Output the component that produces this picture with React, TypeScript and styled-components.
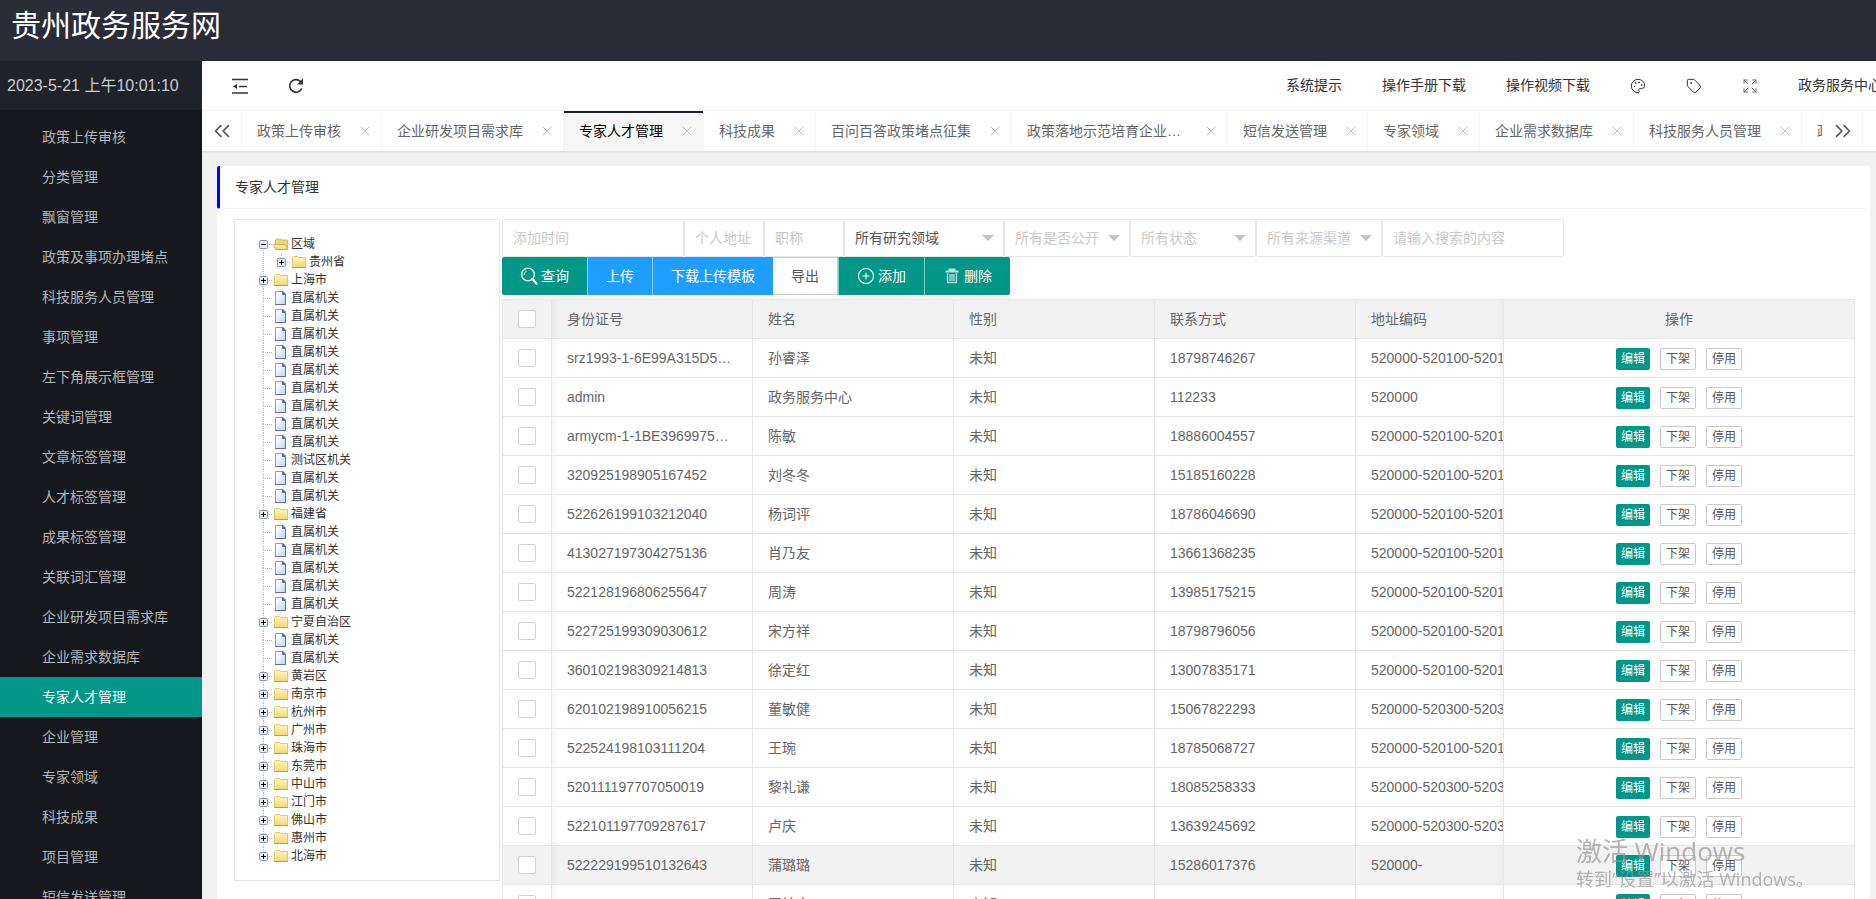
import React from "react";
import styled, { createGlobalStyle, css } from "styled-components";
import { ChevronsLeft, ChevronsRight, CirclePlus, Expand, Palette, Tag, X } from "lucide-react";

const teal = "#009688";
const line = "#e6e6e6";
const faint = "#f6f6f6";

const GlobalStyle = createGlobalStyle`
  * { box-sizing: border-box; }
  body {
    margin: 0;
    color: #333;
    font: 14px/24px "Liberation Sans", "Noto Sans CJK SC", sans-serif;
  }
  button, input, select { font: inherit; color: inherit; }
  ul { margin: 0; padding: 0; list-style: none; }
  a { color: inherit; text-decoration: none; }
`;

const Shell = styled.div`
  display: flex;
  flex-direction: column;
  height: 100vh;
  overflow: hidden;
`;

const Banner = styled.header`
  flex: none;
  height: 61px;
  padding: 4px 11px;
  background: #2a2c38;
`;

const SiteTitle = styled.h1`
  margin: 0;
  color: #fff;
  font-size: 30px;
  font-weight: 400;
  line-height: 44px;
`;

const Body = styled.div`
  display: flex;
  flex: 1;
  min-height: 0;
`;

const Sidebar = styled.nav`
  flex: none;
  width: 202px;
  overflow: hidden;
  background: #17181d;
`;

const Clock = styled.div`
  height: 49px;
  margin-bottom: 7px;
  padding-left: 7px;
  background: #20222a;
  color: #ccc;
  font-size: 16px;
  line-height: 49px;
`;

const MenuLink = styled.a<{ $active: boolean }>`
  display: block;
  padding-left: 42px;
  line-height: 40px;
  color: ${(p) => (p.$active ? "#fff" : "#b6b6b8")};
  background: ${(p) => (p.$active ? teal : "transparent")};
`;

/* The workspace is wider than the window, its last controls run off the right edge. */
const Main = styled.main`
  display: flex;
  flex: 1;
  flex-direction: column;
  min-width: 0;
  margin-right: -26px;
  background: #f1f1f1;
`;

const Toolbar = styled.div`
  display: flex;
  flex: none;
  justify-content: space-between;
  height: 50px;
  padding-left: 10px;
  border-bottom: 1px solid ${faint};
  background: #fff;
`;

const ToolGroup = styled.div`
  display: flex;
`;

const Tool = styled.button`
  display: flex;
  align-items: center;
  height: 49px;
  padding: 0 20px;
  border: 0;
  background: none;
  white-space: nowrap;
`;

const ToolLink = styled(Tool).attrs({ as: "a", href: "#" })`
  padding-bottom: 1px;
`;

const TabBar = styled.div`
  display: flex;
  flex: none;
  height: 40px;
  background: #fff;
  box-shadow: 0 1px 2px rgba(0, 0, 0, 0.1);
`;

const TabControl = styled.button<{ $side: "left" | "right" }>`
  display: flex;
  flex: none;
  align-items: center;
  justify-content: center;
  width: 40px;
  padding: 0;
  border: 0 solid ${faint};
  border-${(p) => (p.$side === "left" ? "right" : "left")}-width: 1px;
  background: #fff;
  color: #555;
`;

const TabList = styled.ul`
  display: flex;
  flex: 1;
  min-width: 0;
  overflow: hidden;
`;

const TabItem = styled.li<{ $active: boolean }>`
  display: flex;
  flex: none;
  align-items: center;
  gap: 16px;
  padding: 0 8px 0 15px;
  border-right: 1px solid ${faint};
  color: #666;
  ${(p) =>
    p.$active &&
    css`
      color: #000;
      background: ${faint};
      box-shadow: inset 0 2px #20222a;
    `}
`;

const TabLabel = styled.a`
  max-width: 160px;
  overflow: hidden;
  line-height: 38px;
  text-overflow: ellipsis;
  white-space: nowrap;
`;

const TabClose = styled.button`
  display: flex;
  align-items: center;
  justify-content: center;
  width: 16px;
  height: 16px;
  padding: 0;
  border: 0;
  background: none;
  color: #c0c0c0;
`;

const Content = styled.div`
  flex: 1;
  min-height: 0;
  padding: 15px 32px 0 15px;
  overflow: hidden;
`;

const Card = styled.section`
  height: 100%;
  border-radius: 2px;
  background: #fff;
`;

const CardTitle = styled.h2`
  height: 43px;
  margin: 0;
  padding: 0 15px;
  border-bottom: 1px solid ${faint};
  border-left: 3px solid #00f;
  border-radius: 2px;
  font-size: 14px;
  font-weight: 400;
  line-height: 42px;
`;

const CardBody = styled.div`
  display: flex;
  align-items: flex-start;
  gap: 2px;
  padding: 10px 15px 0 17px;
`;

const TreePanel = styled.div`
  flex: none;
  width: 266px;
  padding: 15px 20px;
  border: 1px solid ${line};
`;

const TreeRow = styled.li<{ $level: number }>`
  display: flex;
  align-items: center;
  height: 18px;
  padding-left: ${(p) => p.$level * 18}px;
  font-size: 12px;
  line-height: 18px;
  white-space: nowrap;
`;

/* A child row carries its parent's guide line in the indent. */
const Guide = styled.svg`
  margin-left: -18px;
`;

const TreeToggle = styled.button`
  display: flex;
  padding: 0;
  border: 0;
  background: none;
`;

const TreeLink = styled.a`
  display: flex;
  align-items: center;
  gap: 2px;
`;

const Pane = styled.div`
  flex: 1;
  min-width: 0;
`;

const Filters = styled.form`
  display: flex;
`;

const Field = styled.input<{ $width: number }>`
  width: ${(p) => p.$width}px;
  height: 38px;
  padding: 0 0 0 10px;
  border: 1px solid ${line};
  border-radius: 2px;
  background: #fff;
  outline: 0;
  &::placeholder {
    color: #c9c9c9;
    opacity: 1;
  }
`;

const SelectBox = styled.div<{ $width: number; $plain?: boolean }>`
  position: relative;
  width: ${(p) => p.$width}px;
  color: ${(p) => (p.$plain ? "#555" : "#c9c9c9")};
  &::after {
    content: "";
    position: absolute;
    top: 16px;
    right: 10px;
    border: 6px solid transparent;
    border-top-color: #c2c2c2;
    border-bottom: 0;
    pointer-events: none;
  }
`;

const Select = styled.select`
  width: 100%;
  height: 38px;
  padding: 0 0 0 10px;
  border: 1px solid ${line};
  border-radius: 2px;
  appearance: none;
  background: #fff;
  outline: 0;
`;

const Actions = styled.div`
  display: flex;
  margin-bottom: 4px;
`;

const ActionButton = styled.button<{ $tone: "teal" | "blue" | "plain" }>`
  display: flex;
  align-items: center;
  gap: 3px;
  height: 38px;
  padding: 0 18px;
  border: 0;
  border-left: 1px solid rgba(255, 255, 255, 0.5);
  background: ${(p) => (p.$tone === "teal" ? teal : "#1e9fff")};
  color: #fff;
  white-space: nowrap;
  &:first-child {
    border-left: 0;
    border-radius: 2px 0 0 2px;
  }
  &:last-child {
    border-radius: 0 2px 2px 0;
  }
  ${(p) =>
    p.$tone === "plain" &&
    css`
      border: 1px solid #c9c9c9;
      border-left: 0;
      background: #fff;
      color: #555;
    `}
`;

const Table = styled.table`
  width: 100%;
  border: solid ${line};
  border-width: 1px 0 0 1px;
  border-spacing: 0;
  table-layout: fixed;
  color: #666;
`;

const Col = styled.col<{ $width?: number }>`
  width: ${(p) => (p.$width ? `${p.$width}px` : "auto")};
`;

const Row = styled.tr<{ $shade?: boolean }>`
  background: ${(p) => (p.$shade ? "#f2f2f2" : "#fff")};
`;

const cell = css<{ $kind?: "check" | "first" | "clipped" | "ops" }>`
  height: 39px;
  padding: 0 15px;
  overflow: hidden;
  border: solid ${line};
  border-width: 0 1px 1px 0;
  font-weight: 400;
  line-height: 28px;
  text-align: left;
  text-overflow: ellipsis;
  white-space: nowrap;
  ${(p) =>
    p.$kind === "check" &&
    css`
      padding: 0;
      text-align: center;
    `}
  ${(p) =>
    p.$kind === "first" &&
    css`
      background-image: linear-gradient(to right, rgba(0, 0, 0, 0.04), transparent 7px);
    `}
  ${(p) =>
    p.$kind === "clipped" &&
    css`
      padding-right: 0;
      border-right: 0;
      text-overflow: clip;
      background-image: linear-gradient(to left, rgba(0, 0, 0, 0.04), transparent 7px);
    `}
  ${(p) =>
    p.$kind === "ops" &&
    css`
      border-left-width: 1px;
      text-align: center;
    `}
`;

const Th = styled.th`
  ${cell}
`;

const Td = styled.td`
  ${cell}
`;

const Tick = styled.input.attrs({ type: "checkbox" })`
  display: block;
  width: 18px;
  height: 18px;
  margin: 0 auto;
  border: 1px solid #d2d2d2;
  border-radius: 2px;
  appearance: none;
  background: #fff;
`;

const RowActions = styled.div`
  display: flex;
  justify-content: center;
  gap: 10px;
  padding-top: 2px;
`;

const SmallButton = styled.button<{ $filled?: boolean }>`
  height: 22px;
  padding: 0 5px;
  border: ${(p) => (p.$filled ? "0" : "1px solid #c9c9c9")};
  border-radius: 2px;
  background: ${(p) => (p.$filled ? teal : "#fff")};
  color: ${(p) => (p.$filled ? "#fff" : "#555")};
  font-size: 12px;
  line-height: 20px;
`;

const Watermark = styled.div`
  position: fixed;
  right: 64px;
  bottom: 8px;
  width: 236px;
  color: rgba(150, 150, 150, 0.7);
  font-family: "Open Sans", "Noto Sans CJK SC", sans-serif;
  font-size: 18px;
  line-height: 24px;
  white-space: nowrap;
  pointer-events: none;
`;

const WatermarkTitle = styled.div`
  font-size: 26px;
  line-height: 32px;
`;

const menu = [
  "政策上传审核", "分类管理", "飘窗管理", "政策及事项办理堵点", "科技服务人员管理", "事项管理",
  "左下角展示框管理", "关键词管理", "文章标签管理", "人才标签管理", "成果标签管理", "关联词汇管理",
  "企业研发项目需求库", "企业需求数据库", "专家人才管理", "企业管理", "专家领域", "科技成果",
  "项目管理", "短信发送管理",
];

const tabs = [
  "政策上传审核", "企业研发项目需求库", "专家人才管理", "科技成果", "百问百答政策堵点征集",
  "政策落地示范培育企业申报管理", "短信发送管理", "专家领域", "企业需求数据库", "科技服务人员管理", "政策及事项办理堵点",
];

const current = "专家人才管理";

type NodeKind = "open" | "closed" | "file";
type TreeNode = { name: string; kind: NodeKind; level: number };

const folder = (name: string): TreeNode => ({ name, kind: "closed", level: 0 });
const files = (count: number): TreeNode[] =>
  Array.from({ length: count }, () => ({ name: "直属机关", kind: "file", level: 0 }));

const tree: TreeNode[] = [
  { name: "区域", kind: "open", level: 0 },
  { name: "贵州省", kind: "closed", level: 1 },
  folder("上海市"),
  ...files(9),
  { name: "测试区机关", kind: "file", level: 0 },
  ...files(2),
  folder("福建省"),
  ...files(5),
  folder("宁夏自治区"),
  ...files(2),
  ...["黄岩区", "南京市", "杭州市", "广州市", "珠海市", "东莞市", "中山市", "江门市", "佛山市", "惠州市", "北海市"].map(folder),
];

const people = [
  ["srz1993-1-6E99A315D5…", "孙睿泽", "18798746267", "520000-520100-520103"],
  ["admin", "政务服务中心", "112233", "520000"],
  ["armycm-1-1BE3969975…", "陈敏", "18886004557", "520000-520100-520103"],
  ["320925198905167452", "刘冬冬", "15185160228", "520000-520100-520103"],
  ["522626199103212040", "杨词评", "18786046690", "520000-520100-520103"],
  ["413027197304275136", "肖乃友", "13661368235", "520000-520100-520103"],
  ["522128196806255647", "周涛", "13985175215", "520000-520100-520103"],
  ["522725199309030612", "宋方祥", "18798796056", "520000-520100-520103"],
  ["360102198309214813", "徐定红", "13007835171", "520000-520100-520103"],
  ["620102198910056215", "董敏健", "15067822293", "520000-520300-520302"],
  ["522524198103111204", "王琬", "18785068727", "520000-520100-520103"],
  ["520111197707050019", "黎礼谦", "18085258333", "520000-520300-520302"],
  ["522101197709287617", "卢庆", "13639245692", "520000-520300-520302"],
  ["522229199510132643", "蒲璐璐", "15286017376", "520000-"],
  ["", "罗计文", "", ""],
];

const dots = { stroke: "#bbb", strokeDasharray: "1 1", fill: "none" };

function Switch({ node, first, last }: { node: TreeNode; first: boolean; last: boolean }) {
  return (
    <svg width="18" height="18" viewBox="0 0 18 18" aria-hidden="true">
      {!first && <path d="M8.5 0V9" {...dots} />}
      {!last && node.level === 0 && <path d="M8.5 9V18" {...dots} />}
      <path d="M8 9.5H17" {...dots} />
      {node.kind !== "file" && (
        <g>
          <rect x="4.5" y="5.5" width="8" height="8" rx="1" fill="#ece9e2" stroke="#7898b5" />
          <path d="M6 9.5h5" stroke="#000" />
          {node.kind === "closed" && <path d="M8.5 7v5" stroke="#000" />}
        </g>
      )}
    </svg>
  );
}

function TreeGradients() {
  return (
    <svg width="0" height="0" display="block" aria-hidden="true">
      <defs>
        <linearGradient id="folder" x1="0" y1="0" x2="0" y2="1">
          <stop offset="0" stopColor="#fff7bd" />
          <stop offset="1" stopColor="#f1d873" />
        </linearGradient>
        <linearGradient id="page" x1="0" y1="0" x2="1" y2="1">
          <stop offset="0.2" stopColor="#fbfdff" />
          <stop offset="1" stopColor="#b9d5fb" />
        </linearGradient>
      </defs>
    </svg>
  );
}

function NodeIcon({ kind }: { kind: NodeKind }) {
  if (kind === "file") {
    return (
      <svg width="16" height="16" viewBox="0 0 16 16" aria-hidden="true">
        <path d="M2.500 1.500h7l3 3v10h-10z" fill="url(#page)" stroke="#7f9fd6" />
        <path d="M9 1h1l3 3v1H9z" fill="#4f72b8" />
        <path d="M2 14.500h10.500V5" stroke="#666c9b" fill="none" />
      </svg>
    );
  }
  if (kind === "open") {
    return (
      <svg width="16" height="16" viewBox="0 0 16 16" aria-hidden="true">
        <path d="M2.500 12.500v-8.500l1-1h4l1 1h6v8.500z" fill="#efd571" stroke="#dcbc55" />
        <path d="M.500 8.500h12l2 5h-12z" fill="url(#folder)" stroke="#d4b24a" />
      </svg>
    );
  }
  return (
    <svg width="16" height="16" viewBox="0 0 16 16" aria-hidden="true">
      <path d="M1.500 13.500V3.500l1-1h4l1 1h7v10z" fill="url(#folder)" stroke="#e3c665" />
      <path d="M1 13.500h14" stroke="#c39d3c" />
    </svg>
  );
}

function TreeItem({ node, first, last }: { node: TreeNode; first: boolean; last: boolean }) {
  const toggle = <Switch node={node} first={first} last={last} />;
  return (
    <TreeRow $level={node.level}>
      {node.level > 0 && (
        <Guide width="18" height="18" aria-hidden="true">
          <path d="M8.500 0V18" {...dots} />
        </Guide>
      )}
      {node.kind === "file" ? toggle : <TreeToggle aria-label={`展开${node.name}`}>{toggle}</TreeToggle>}
      <TreeLink href="#">
        <NodeIcon kind={node.kind} />
        {node.name}
      </TreeLink>
    </TreeRow>
  );
}

function ShrinkIcon() {
  return (
    <svg width="16" height="16" viewBox="0 0 16 16" fill="none" stroke="#333" strokeWidth="1.500" aria-hidden="true">
      <path d="M0 1.500h16M7 8.500h8M0 15h16" />
      <path d="M5 6v5L1 8.500z" fill="#333" stroke="none" />
    </svg>
  );
}

function RefreshIcon() {
  return (
    <svg width="16" height="18" viewBox="0 0 16 18" fill="none" stroke="#333" strokeWidth="1.700" aria-hidden="true">
      <path d="M13.800 11.500A6.300 6.300 0 1 1 12.500 4.500L14 6" />
      <path d="M15 1.500v6H9z" fill="#333" stroke="none" />
    </svg>
  );
}

function SearchIcon() {
  return (
    <svg width="18" height="18" viewBox="0 0 18 18" fill="none" stroke="#fff" aria-hidden="true">
      <circle cx="8" cy="7.500" r="6.300" strokeWidth="1.300" />
      <path d="M4.500 8a3.500 3.500 0 0 1 2-4" strokeWidth="1" />
      <path d="M12.500 12l4 4.500" strokeWidth="2.400" strokeLinecap="round" />
    </svg>
  );
}

function TrashIcon() {
  return (
    <svg width="18" height="18" viewBox="0 0 18 18" fill="none" stroke="#b9e0dc" strokeWidth="1.300" aria-hidden="true">
      <path d="M2.500 4.500h13M6.500 4V2.500h5V4" strokeWidth="2" />
      <path d="M4.500 6v9.500h9V6M7 7v7M9 7v7M11 7v7" />
    </svg>
  );
}

function FilterSelect({ label, width, plain }: { label: string; width: number; plain?: boolean }) {
  return (
    <SelectBox $width={width} $plain={plain}>
      <Select aria-label={label}>
        <option>{label}</option>
      </Select>
    </SelectBox>
  );
}

export default function App() {
  return (
    <Shell>
      <GlobalStyle />
      <Banner>
        <SiteTitle>贵州政务服务网</SiteTitle>
      </Banner>
      <Body>
        <Sidebar>
          <Clock>2023-5-21 上午10:01:10</Clock>
          <ul>
            {menu.map((name) => (
              <li key={name}>
                <MenuLink href="#" $active={name === current}>{name}</MenuLink>
              </li>
            ))}
          </ul>
        </Sidebar>
        <Main>
          <Toolbar>
            <ToolGroup>
              <Tool aria-label="收起菜单"><ShrinkIcon /></Tool>
              <Tool aria-label="刷新"><RefreshIcon /></Tool>
            </ToolGroup>
            <ToolGroup>
              <ToolLink>系统提示</ToolLink>
              <ToolLink>操作手册下载</ToolLink>
              <ToolLink>操作视频下载</ToolLink>
              <Tool aria-label="主题"><Palette size={16} strokeWidth={1.5} /></Tool>
              <Tool aria-label="标签"><Tag size={16} strokeWidth={1.5} /></Tool>
              <Tool aria-label="全屏"><Expand size={16} strokeWidth={1.5} color="#666" /></Tool>
              <ToolLink>政务服务中心</ToolLink>
            </ToolGroup>
          </Toolbar>
          <TabBar>
            <TabControl $side="left" aria-label="向左"><ChevronsLeft size={26} strokeWidth={1.5} /></TabControl>
            <TabList>
              {tabs.map((name) => (
                <TabItem key={name} $active={name === current}>
                  <TabLabel href="#">{name}</TabLabel>
                  <TabClose aria-label={`关闭${name}`}><X size={16} strokeWidth={1.5} /></TabClose>
                </TabItem>
              ))}
            </TabList>
            <TabControl $side="right" aria-label="向右"><ChevronsRight size={26} strokeWidth={1.5} /></TabControl>
            <TabControl $side="right" aria-label="更多" />
          </TabBar>
          <Content>
            <Card>
              <CardTitle>专家人才管理</CardTitle>
              <CardBody>
                <TreePanel>
                  <TreeGradients />
                  <ul>
                    {tree.map((node, i) => (
                      <TreeItem key={i} node={node} first={i === 0} last={i === tree.length - 1} />
                    ))}
                  </ul>
                </TreePanel>
                <Pane>
                  <Filters>
                    <Field $width={182} placeholder="添加时间" aria-label="添加时间" />
                    <Field $width={80} placeholder="个人地址" aria-label="个人地址" />
                    <Field $width={80} placeholder="职称" aria-label="职称" />
                    <FilterSelect width={160} label="所有研究领域" plain />
                    <FilterSelect width={126} label="所有是否公开" />
                    <FilterSelect width={126} label="所有状态" />
                    <FilterSelect width={126} label="所有来源渠道" />
                    <Field $width={182} placeholder="请输入搜索的内容" aria-label="请输入搜索的内容" />
                  </Filters>
                  <Actions>
                    <ActionButton $tone="teal"><SearchIcon />查询</ActionButton>
                    <ActionButton $tone="blue">上传</ActionButton>
                    <ActionButton $tone="blue">下载上传模板</ActionButton>
                    <ActionButton $tone="plain">导出</ActionButton>
                    <ActionButton $tone="teal"><CirclePlus size={18} strokeWidth={1.5} />添加</ActionButton>
                    <ActionButton $tone="teal"><TrashIcon />删除</ActionButton>
                  </Actions>
                  <Table>
                    <colgroup>
                      <Col $width={49} />
                      <Col $width={201} />
                      <Col $width={201} />
                      <Col $width={201} />
                      <Col $width={201} />
                      <Col />
                      <Col $width={352} />
                    </colgroup>
                    <thead>
                      <Row $shade>
                        <Th $kind="check"><Tick aria-label="全选" /></Th>
                        <Th $kind="first">身份证号</Th>
                        <Th>姓名</Th>
                        <Th>性别</Th>
                        <Th>联系方式</Th>
                        <Th $kind="clipped">地址编码</Th>
                        <Th $kind="ops">操作</Th>
                      </Row>
                    </thead>
                    <tbody>
                      {people.map(([id, name, phone, area]) => (
                        <Row key={name} $shade={name === "蒲璐璐"}>
                          <Td $kind="check"><Tick aria-label={name} /></Td>
                          <Td $kind="first">{id}</Td>
                          <Td>{name}</Td>
                          <Td>未知</Td>
                          <Td>{phone}</Td>
                          <Td $kind="clipped">{area}</Td>
                          <Td $kind="ops">
                            <RowActions>
                              <SmallButton $filled>编辑</SmallButton>
                              <SmallButton>下架</SmallButton>
                              <SmallButton>停用</SmallButton>
                            </RowActions>
                          </Td>
                        </Row>
                      ))}
                    </tbody>
                  </Table>
                </Pane>
              </CardBody>
            </Card>
          </Content>
        </Main>
      </Body>
      <Watermark>
        <WatermarkTitle>激活 Windows</WatermarkTitle>
        转到“设置”以激活 Windows。
      </Watermark>
    </Shell>
  );
}
